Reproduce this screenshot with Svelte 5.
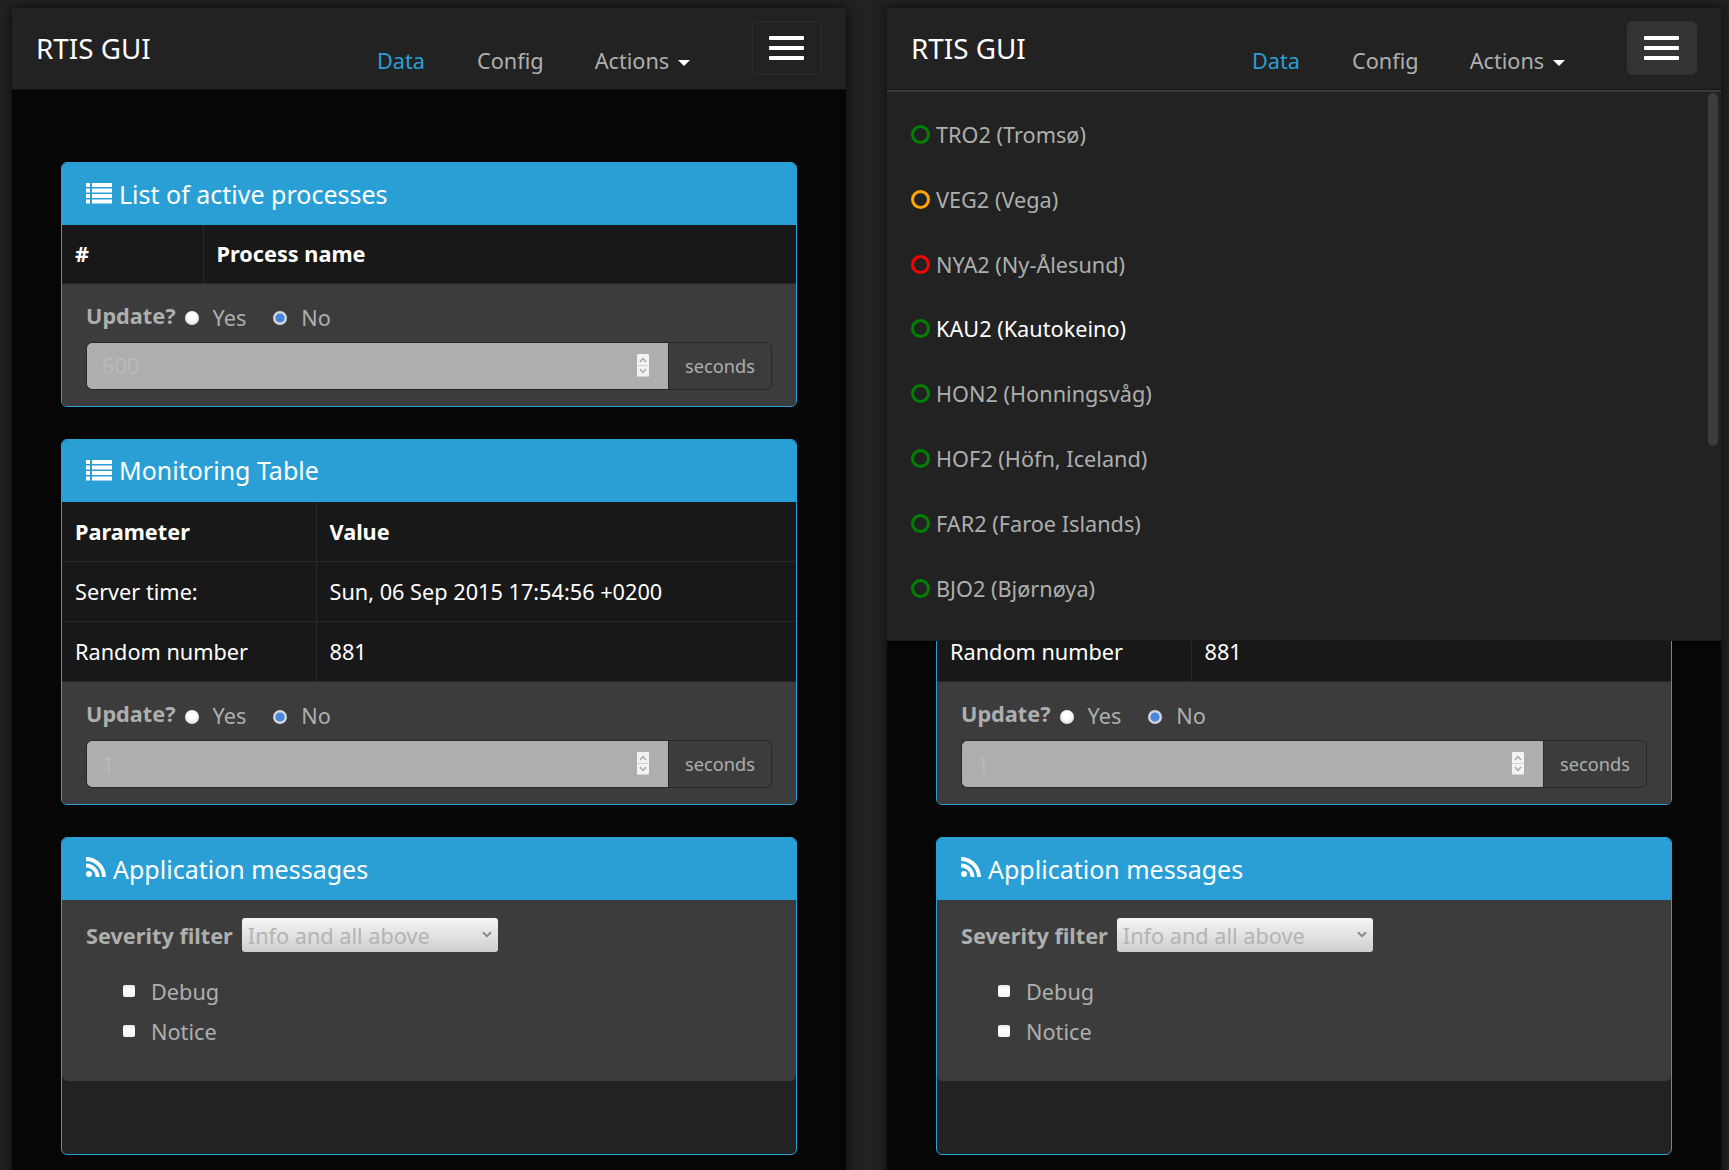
<script>
    const sites = [
        { name: "TRO2 (Tromsø)", color: "green" },
        { name: "VEG2 (Vega)", color: "orange" },
        { name: "NYA2 (Ny-Ålesund)", color: "red" },
        { name: "KAU2 (Kautokeino)", color: "green", hover: true },
        { name: "HON2 (Honningsvåg)", color: "green" },
        { name: "HOF2 (Höfn, Iceland)", color: "green" },
        { name: "FAR2 (Faroe Islands)", color: "green" },
        { name: "BJO2 (Bjørnøya)", color: "green" },
    ];
</script>

{#snippet listIcon()}
    <svg class="icon-list" width="26" height="21" viewBox="0 0 26 21" fill="#fff">
        <rect x="0" y="0" width="4" height="4" />
        <rect x="6" y="0" width="20" height="4" />
        <rect x="0" y="5.5" width="4" height="4" />
        <rect x="6" y="5.5" width="20" height="4" />
        <rect x="0" y="11" width="4" height="4" />
        <rect x="6" y="11" width="20" height="4" />
        <rect x="0" y="16.5" width="4" height="4" />
        <rect x="6" y="16.5" width="20" height="4" />
    </svg>
{/snippet}

{#snippet updateForm(value)}
    <div class="update-form">
        <div class="radios">
            <strong>Update?</strong>
            <input class="radio first" type="radio" disabled />
            <span class="radio-label">Yes</span>
            <input class="radio second" type="radio" checked disabled />
            <span class="radio-label">No</span>
        </div>
        <div class="input-group">
            <div class="number-wrap">
                <input class="number" type="text" {value} disabled />
                <svg class="spinner" width="12" height="23" viewBox="0 0 12 23">
                    <rect width="12" height="22" rx="1" fill="#f3f3f3" />
                    <rect y="11" width="12" height="1" fill="#d4d4d4" />
                    <rect y="22" width="12" height="1" fill="#d4d4d4" />
                    <path d="M3 8 L6 4.5 L9 8" fill="none" stroke="#a8a8a8" stroke-width="1.4" />
                    <path d="M3 15 L6 18.5 L9 15" fill="none" stroke="#a8a8a8" stroke-width="1.4" />
                </svg>
            </div>
            <span class="addon">seconds</span>
        </div>
    </div>
{/snippet}

{#snippet win(open)}
    <div class="window">
        <nav class="navbar" class:open>
            <span class="brand">RTIS GUI</span>
            <ul class="nav">
                <li class="active">Data</li>
                <li>Config</li>
                <li>Actions <span class="caret"></span></li>
            </ul>
            <button class="toggle" aria-label="Toggle navigation">
                <span></span><span></span><span></span>
            </button>
        </nav>

        {#if open}
            <div class="site-menu">
                {#each sites as s}
                    <div class="site" class:hover={s.hover}>
                        <span class="dot" style="border-color: {s.color}"></span>
                        {s.name}
                    </div>
                {/each}
                <div class="scrollbar"></div>
            </div>
        {/if}

        <main class="content">
            <section class="panel">
                <h3 class="panel-head">{@render listIcon()}<span>List of active processes</span></h3>
                <table class="short">
                    <thead>
                        <tr><th class="c1">#</th><th>Process name</th></tr>
                    </thead>
                </table>
                {@render updateForm("600")}
            </section>

            <section class="panel">
                <h3 class="panel-head">{@render listIcon()}<span>Monitoring Table</span></h3>
                <table>
                    <thead>
                        <tr><th class="c2">Parameter</th><th>Value</th></tr>
                    </thead>
                    <tbody>
                        <tr><td>Server time:</td><td>Sun, 06 Sep 2015 17:54:56 +0200</td></tr>
                        <tr><td>Random number</td><td>881</td></tr>
                    </tbody>
                </table>
                {@render updateForm("1")}
            </section>

            <section class="panel">
                <h3 class="panel-head">
                    <svg class="icon-rss" width="20" height="20" viewBox="0 0 20 20" fill="#fff">
                        <circle cx="3" cy="17" r="3" />
                        <path d="M0 6.5 C7.5 6.5 13.5 12.5 13.5 20 L9.6 20 C9.6 14.7 5.3 10.4 0 10.4 Z" />
                        <path d="M0 0 C11 0 20 9 20 20 L16.1 20 C16.1 11.1 8.9 3.9 0 3.9 Z" />
                    </svg>
                    <span>Application messages</span>
                </h3>
                <div class="messages">
                    <div class="filter">
                        <strong>Severity filter</strong>
                        <div class="select-wrap">
                            <select disabled>
                                <option>Info and all above</option>
                            </select>
                            <svg class="chevron" width="10" height="7" viewBox="0 0 10 7">
                                <path d="M1 1.2 L5 5.2 L9 1.2" fill="none" stroke="#8a8a8a" stroke-width="2" />
                            </svg>
                        </div>
                    </div>
                    <label class="check"><input type="checkbox" disabled />Debug</label>
                    <label class="check"><input type="checkbox" disabled />Notice</label>
                </div>
                <div class="log"></div>
            </section>
        </main>
    </div>
{/snippet}

<div class="page">
    {@render win(false)}
    {@render win(true)}
</div>

<style>
    :global(body) {
        background: #222;
        font-family: "Noto Sans", "Open Sans", sans-serif;
        overflow: hidden;
    }

    .page {
        display: flex;
        gap: 41px;
        padding: 8px 8px 0 12px;
        height: 1170px;
        box-sizing: border-box;
        overflow: hidden;
    }

    .window {
        position: relative;
        width: 834px;
        height: 1180px;
        flex: none;
        background: #060606;
        box-shadow: 0 0 12px rgba(0, 0, 0, 0.75);
        color: #adafae;
        font-size: 21.7px;
    }

    .navbar {
        display: flex;
        height: 82px;
        background: #222;
        box-sizing: border-box;
        border-bottom: 1px solid #111;
    }

    .navbar.open {
        position: relative;
        height: 84px;
        margin-bottom: -2px;
        border-bottom: 2px solid #3a3a3a;
        box-shadow: inset 0 -1px 0 #181818;
        z-index: 3;
    }

    .brand {
        margin: 20px 0 0 24px;
        width: 341px;
        font-size: 27.8px;
        line-height: 40px;
        color: #fff;
    }

    .nav {
        display: flex;
        list-style: none;
        margin: 0;
        padding: 36.5px 0 0;
        line-height: 32px;
        width: 375px;
    }

    .nav li {
        margin-right: 52px;
        white-space: nowrap;
    }

    .nav li:nth-child(2) {
        margin-right: 51px;
    }

    .nav .active {
        color: #2a9fd6;
    }

    .caret {
        display: inline-block;
        margin-left: 3px;
        vertical-align: middle;
        border-top: 6px solid #fff;
        border-left: 6px solid transparent;
        border-right: 6px solid transparent;
    }

    .toggle {
        display: flex;
        flex-direction: column;
        justify-content: center;
        gap: 6.5px;
        align-items: center;
        width: 70px;
        height: 54px;
        margin-top: 13px;
        padding: 0 1px 0 0;
        background: none;
        border: 1px solid #2e2e2e;
        border-radius: 6px;
    }

    .open .toggle {
        background: #333;
        border-color: #333;
    }

    .toggle span {
        display: block;
        width: 35px;
        height: 3.5px;
        background: #fff;
        border-radius: 1px;
    }

    .site-menu {
        position: absolute;
        top: 84px;
        left: 0;
        right: 0;
        height: 549px;
        background: #222;
        z-index: 2;
        padding-top: 10px;
        box-sizing: border-box;
        border-bottom: 1px solid #1a1a1a;
    }

    .site {
        display: flex;
        align-items: center;
        gap: 6px;
        height: 64.85px;
        padding-left: 24px;
    }

    .site.hover {
        color: #fff;
    }

    .dot {
        width: 19px;
        height: 19px;
        box-sizing: border-box;
        border: 3px solid;
        border-radius: 50%;
    }

    .scrollbar {
        position: absolute;
        top: 1px;
        right: 3px;
        width: 10px;
        height: 353px;
        background: #3c3c3c;
        border-radius: 5px;
    }

    .content {
        padding: 72px 49px 0;
    }

    .panel {
        background: #222;
        border: 1px solid #2a9fd6;
        border-radius: 6px;
        margin-bottom: 32px;
        overflow: hidden;
    }

    .panel-head {
        display: flex;
        align-items: center;
        height: 63px;
        margin: -1px -1px 0;
        padding-left: 25px;
        background: #2a9fd6;
        color: #fff;
        font-size: 25px;
        font-weight: 400;
        border-radius: 6px 6px 0 0;
    }

    .icon-list {
        margin-right: 7px;
    }

    .icon-rss {
        margin-right: 7px;
        margin-top: -4px;
    }

    table {
        width: 100%;
        border-collapse: collapse;
        background: #181818;
        color: #fff;
    }

    th,
    td {
        height: 60px;
        box-sizing: border-box;
        padding: 0 13px;
        text-align: left;
        border-bottom: 1px solid #282828;
    }

    th:first-child,
    td:first-child {
        border-right: 1px solid #282828;
    }

    .short th {
        height: 58px;
    }

    .c1 {
        width: 141px;
        box-sizing: border-box;
    }

    .c2 {
        width: 254px;
        box-sizing: border-box;
    }

    .update-form {
        background: #3c3c3c;
        padding: 15.5px 24px 16px 24px;
    }

    .radios {
        display: flex;
        align-items: center;
        height: 36px;
        margin-bottom: 6.5px;
    }

    .radios strong {
        margin-top: -4px;
    }

    .radio {
        appearance: none;
        flex: none;
        width: 14px;
        height: 14px;
        margin: 2px 0 0;
        border-radius: 50%;
        background: radial-gradient(circle at 50% 40%, #fff 30%, #d8d8d4 90%);
    }

    .radio.first {
        margin-left: 9px;
    }

    .radio.second {
        margin-left: 27px;
        background: radial-gradient(circle, #4a86e0 0 42%, #d2d6da 50% 100%);
    }

    .radio-label {
        margin-left: 14px;
    }

    .input-group {
        display: flex;
        height: 48px;
    }

    .number-wrap {
        position: relative;
        flex: 1;
    }

    .number {
        width: 100%;
        height: 100%;
        box-sizing: border-box;
        padding: 0 15px;
        background: #adafae;
        border: 1px solid #282828;
        border-right: 0;
        border-radius: 6px 0 0 6px;
        color: #b9bab9;
        font: inherit;
        opacity: 1;
    }

    .spinner {
        position: absolute;
        top: 12px;
        right: 19px;
    }

    .addon {
        display: flex;
        align-items: center;
        width: 104px;
        box-sizing: border-box;
        justify-content: center;
        background: #3c3c3c;
        border: 1px solid #282828;
        border-radius: 0 6px 6px 0;
        font-size: 18.2px;
    }

    .messages {
        background: #3c3c3c;
        padding: 18px 24px 0 24px;
        height: 181px;
        box-sizing: border-box;
        border-radius: 0 0 6px 6px;
    }

    .filter {
        display: flex;
        align-items: center;
        gap: 9px;
        height: 34px;
        margin-bottom: 19px;
    }

    .select-wrap {
        position: relative;
        width: 256px;
        height: 34px;
    }

    select {
        appearance: none;
        width: 100%;
        height: 100%;
        padding: 0 6px;
        border: 0;
        border-radius: 3px;
        background: linear-gradient(#f5f5f5, #cfcfcf);
        color: #b4b4b4;
        font: inherit;
        opacity: 1;
    }

    .chevron {
        position: absolute;
        top: 13px;
        right: 6px;
    }

    .check {
        display: flex;
        align-items: center;
        height: 40px;
        padding-left: 37px;
    }

    .check input {
        appearance: none;
        width: 12px;
        height: 12px;
        margin: 0 16px 0 0;
        border-radius: 2px;
        background: linear-gradient(#e8e8e8, #fff 40%, #f4f4f4);
    }

    .log {
        height: 73px;
    }
</style>
